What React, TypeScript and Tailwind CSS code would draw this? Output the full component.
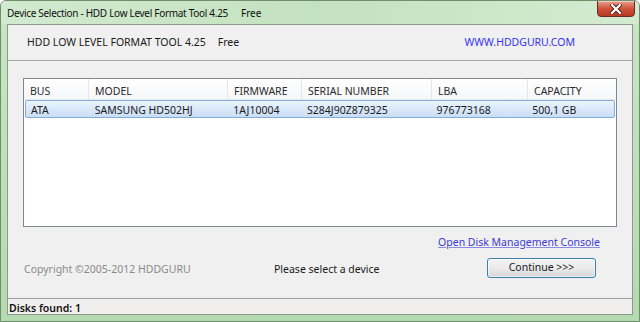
import React from "react";

const font = { fontFamily: '"Noto Sans", "Open Sans", sans-serif' };

const cols = [
  { label: "BUS", w: 65, v: "ATA" },
  { label: "MODEL", w: 139, v: "SAMSUNG HD502HJ" },
  { label: "FIRMWARE", w: 74, v: "1AJ10004" },
  { label: "SERIAL NUMBER", w: 130, v: "S284J90Z879325" },
  { label: "LBA", w: 96, v: "976773168" },
  { label: "CAPACITY", w: 87, v: "500,1 GB" },
];

export default function App() {
  return (
    <div
      className="relative w-[640px] h-[322px] overflow-hidden flex flex-col rounded-t-[6px] border border-[#6f8f6c] bg-gradient-to-b from-[#c9e6c4] via-[#bfe0ba] to-[#b4dab0] text-[10.5px] text-[#1a1a1a]"
      style={font}
    >
      {/* title bar */}
      <div className="h-[23px] flex items-center pl-[6px] bg-gradient-to-r from-[#d2ead0] via-[#c3e2be] to-[#d4ebd1] shrink-0">
        <span className="text-[10px] tracking-[-0.3px] leading-none text-[#111] whitespace-nowrap">
          Device Selection - HDD Low Level Format Tool 4.25
        </span>
        <span className="ml-[13px] text-[10px] leading-none text-[#111]">Free</span>
      </div>
      {/* close button */}
      <div className="absolute top-[-1px] left-[596px] w-[38px] h-[17px] rounded-b-[4px] border border-[#6b2a1f] bg-gradient-to-b from-[#e8a08f] via-[#d0533a] to-[#b8371f] flex items-center justify-center shadow-[inset_0_1px_0_rgba(255,255,255,0.5)]">
        <svg width="12" height="10" viewBox="0 0 12 10">
          <path d="M2 1 L10 9 M10 1 L2 9" stroke="#4a1a12" strokeWidth="4" strokeLinecap="square" />
          <path d="M2 1 L10 9 M10 1 L2 9" stroke="#ffffff" strokeWidth="2.2" strokeLinecap="square" />
        </svg>
      </div>

      {/* client area */}
      <div className="flex-1 mx-[6px] mb-[6px] flex flex-col bg-[#f0f0f0] border border-[#8d9a8b]">
        {/* header strip */}
        <div className="h-[36px] shrink-0 flex items-center border-b border-[#a8a8a8] pl-[19px] pr-[57px]">
          <span className="text-[#1a1a1a]">HDD LOW LEVEL FORMAT TOOL 4.25</span>
          <span className="ml-[12px] text-[#1a1a1a]">Free</span>
          <span className="ml-auto text-[#3535f0]">WWW.HDDGURU.COM</span>
        </div>

        {/* body */}
        <div className="flex-1 flex flex-col">
          {/* list box */}
          <div className="mt-[17px] ml-[15px] w-[594px] h-[149px] bg-white border border-[#828790] shrink-0">
            <div className="h-[21px] flex bg-gradient-to-b from-white to-[#f6f7f9] border-b border-[#e6e8ec]">
              {cols.map((c, i) => (
                <div
                  key={c.label}
                  className={`flex items-center pl-[6px] pt-[5px] text-[#2b2b2b] ${i < cols.length - 1 ? "border-r border-[#e3e5e8]" : ""}`}
                  style={{ width: c.w }}
                >
                  {c.label}
                </div>
              ))}
            </div>
            <div className="mx-[1px] h-[18px] flex rounded-[2px] border border-[#84acdd] bg-gradient-to-b from-[#eaf3fd] to-[#c9def5]">
              {cols.map((c, i) => (
                <div
                  key={c.label}
                  className="flex items-center pl-[5px] pt-[3px] text-[#1a1a1a]"
                  style={{ width: i === 0 ? c.w - 1 : c.w }}
                >
                  {c.v}
                </div>
              ))}
            </div>
          </div>

          {/* link row */}
          <div className="mt-[8px] h-[17px] flex justify-end pr-[32px]">
            <span className="underline text-[#3b3bd6] decoration-[#8a8ae0]">Open Disk Management Console</span>
          </div>

          {/* bottom row */}
          <div className="mt-[6px] h-[20px] flex items-center">
            <span className="ml-[16px] w-[250px] mt-[4px] text-[#8a8a8a]">Copyright ©2005-2012 HDDGURU</span>
            <span className="w-[213px] mt-[4px] text-[#1a1a1a]">Please select a device</span>
            <div className="w-[109px] h-[20px] rounded-[3px] border border-[#3c7fb1] bg-gradient-to-b from-[#f3f3f3] via-[#ebebeb] to-[#d6d6d6] flex items-center justify-center text-[#1a1a1a] shadow-[inset_0_0_0_1px_rgba(255,255,255,0.6)]">
              Continue &gt;&gt;&gt;
            </div>
          </div>
        </div>

        {/* status bar */}
        <div className="h-[16px] shrink-0 border-t border-[#a0a0a0] bg-[#f1efee] flex items-center pl-[1px] pt-[3px]">
          <span className="leading-none font-semibold text-[#111]">Disks found: 1</span>
        </div>
      </div>
    </div>
  );
}
